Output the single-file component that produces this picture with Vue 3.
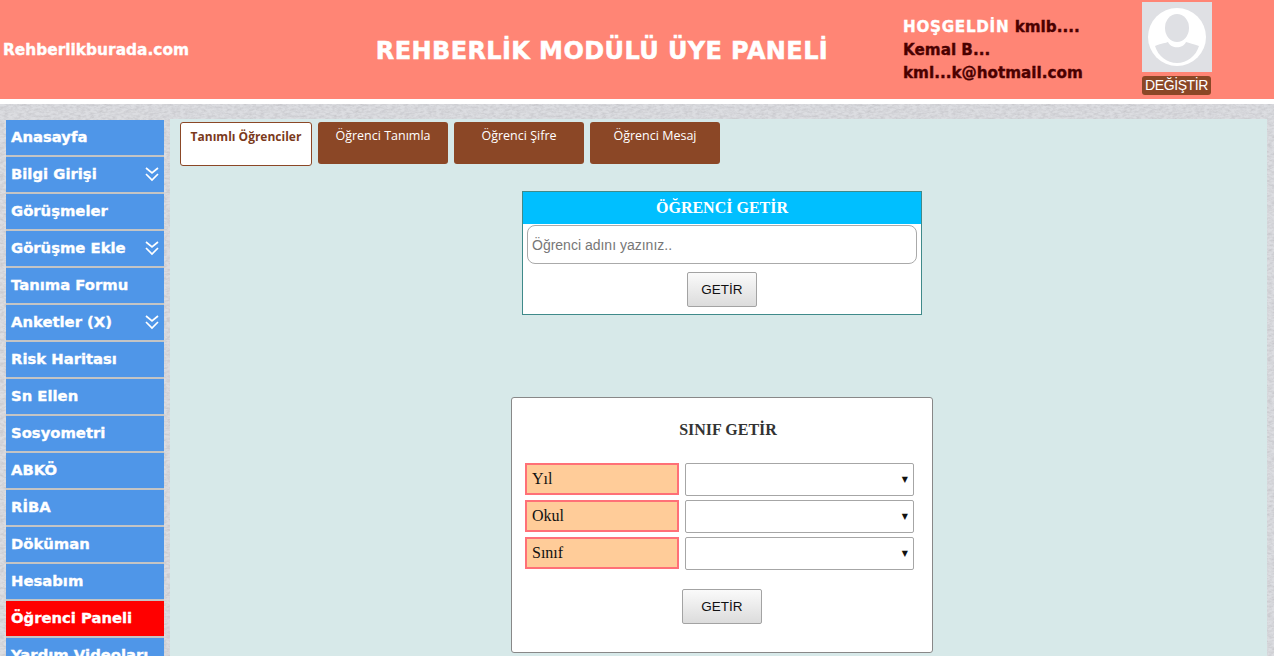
<script setup>
const menu = [
  { t: 'Anasayfa' }, { t: 'Bilgi Girişi', c: 1 }, { t: 'Görüşmeler' }, { t: 'Görüşme Ekle', c: 1 },
  { t: 'Tanıma Formu' }, { t: 'Anketler (X)', c: 1 }, { t: 'Risk Haritası' }, { t: 'Sn Ellen' },
  { t: 'Sosyometri' }, { t: 'ABKÖ' }, { t: 'RİBA' }, { t: 'Döküman' }, { t: 'Hesabım' },
  { t: 'Öğrenci Paneli', a: 1 }, { t: 'Yardım Videoları' }
]
const tabs = ['Tanımlı Öğrenciler', 'Öğrenci Tanımla', 'Öğrenci Şifre', 'Öğrenci Mesaj']
const rows = ['Yıl', 'Okul', 'Sınıf']
</script>

<template>
  <div class="page">
    <header class="head">
      <div class="brand">Rehberlikburada.com</div>
      <h1 class="title">REHBERLİK MODÜLÜ ÜYE PANELİ</h1>
      <div class="user">
        <div><span class="w">HOŞGELDİN</span> kmlb....</div>
        <div>Kemal B...</div>
        <div>kml...k@hotmail.com</div>
      </div>
      <div class="pic">
        <svg class="avatar" width="70" height="70" viewBox="0 0 70 70">
          <rect width="70" height="70" fill="#dfe0e4" />
          <circle cx="35" cy="35" r="29" fill="#fff" />
          <ellipse cx="35" cy="26" rx="12" ry="14" fill="#dfe0e4" />
          <path d="M13 44C20 41 24 41 26 40C29 47 41 47 44 40C47 41 52 42 57 44C54 54 45 61 35 61S16 54 13 44z" fill="#dfe0e4" />
        </svg>
        <span class="change">DEĞİŞTİR</span>
      </div>
    </header>
    <div class="strip"></div>
    <div class="body">
      <nav class="side">
        <a v-for="m in menu" :key="m.t" class="item" :class="{ active: m.a }">
          <span>{{ m.t }}</span>
          <svg v-if="m.c" class="chev" width="14" height="16" viewBox="0 0 14 16" fill="none" stroke="#fff" stroke-width="1.7">
            <path d="M1 2l6 5 6-5M1 8l6 6 6-6" />
          </svg>
        </a>
      </nav>
      <main class="panel">
        <div class="tabs">
          <button v-for="(t, i) in tabs" :key="t" class="tab" :class="{ on: i === 0 }">{{ t }}</button>
        </div>
        <section class="box1">
          <h3 class="box1-h">ÖĞRENCİ GETİR</h3>
          <div class="inp-wrap"><input class="inp" placeholder="Öğrenci adını yazınız.." /></div>
          <button class="btn b1">GETİR</button>
        </section>
        <section class="box2">
          <h3 class="box2-h">SINIF GETİR</h3>
          <div v-for="r in rows" :key="r" class="row">
            <div class="lab">{{ r }}</div>
            <div class="sel"><span class="arrow">▼</span></div>
          </div>
          <button class="btn b2">GETİR</button>
        </section>
      </main>
    </div>
  </div>
</template>

<style scoped>
.page {
  height: 656px;
  overflow: hidden;
  font-family: "DejaVu Sans", sans-serif;
  background-color: #dcdde1;
  background-image: url("data:image/svg+xml,%3Csvg xmlns='http://www.w3.org/2000/svg' width='256' height='256'%3E%3Cfilter id='n'%3E%3CfeTurbulence type='fractalNoise' baseFrequency='.22 .45' numOctaves='3' stitchTiles='stitch'/%3E%3CfeColorMatrix values='0 0 0 0 .55 0 0 0 0 .55 0 0 0 0 .58 1.6 0 0 0 -.55'/%3E%3C/filter%3E%3Crect width='256' height='256' filter='url(%23n)'/%3E%3C/svg%3E");
}
.head {
  height: 99px;
  background: #ff8575;
  border-bottom: 5px solid #fff;
  display: flex;
  align-items: flex-start;
  color: #fff;
}
.brand {
  width: 262px;
  padding: 41px 0 0 3px;
  box-sizing: border-box;
  font-size: 15.4px;
  font-weight: bold;
  line-height: 18px;
  -webkit-text-stroke: .35px #fff;
}
.title {
  width: 640px;
  box-sizing: border-box;
  padding-left: 40px;
  margin: 37px 0 0;
  text-align: center;
  font-size: 24px;
  line-height: 28px;
  font-weight: bold;
  letter-spacing: .4px;
  -webkit-text-stroke: .5px #fff;
  white-space: nowrap;
}
.user {
  width: 239px;
  margin-left: 1px;
  padding-top: 16px;
  font-size: 15.2px;
  line-height: 23px;
  font-weight: bold;
  color: #4a0000;
  -webkit-text-stroke: .35px #4a0000;
}
.w { color: #fff; letter-spacing: .7px; -webkit-text-stroke: .35px #fff; }
.pic {
  padding-top: 2px;
  display: flex;
  flex-direction: column;
  align-items: flex-start;
}
.avatar { display: block; }
.change {
  margin-top: 4px;
  width: 69px;
  height: 19px;
  line-height: 19px;
  text-align: center;
  background: #8b4726;
  border-radius: 3px;
  font-family: "Liberation Sans", sans-serif;
  font-size: 14px;
  letter-spacing: -.4px;
  color: #fff;
}
.strip { height: 15px; }
.body {
  display: flex;
  align-items: flex-start;
  padding: 0 7px 0 0;
}
.side {
  width: 158px;
  margin: 1px 6px 0 6px;
  flex: none;
  display: flex;
  flex-direction: column;
  gap: 2px;
  background: #c4c4c4;
}
.item {
  height: 35px;
  background: #4f96e8;
  color: #fff;
  font-size: 14.8px;
  font-weight: bold;
  line-height: 34px;
  padding: 0 5px;
  display: flex;
  justify-content: space-between;
  align-items: flex-start;
  white-space: nowrap;
  -webkit-text-stroke: .35px #fff;
}
.item.active { background: #f00; }
.chev { margin-top: 9px; }
.panel {
  flex: 1;
  height: 537px;
  background: #d7e9e9;
  display: flex;
  flex-direction: column;
  align-items: flex-start;
}
.tabs {
  display: flex;
  align-items: flex-start;
  gap: 6px;
  margin: 3px 0 0 10px;
}
.tab {
  width: 130px;
  height: 42px;
  border: 0;
  border-radius: 3px;
  background: #8b4726;
  color: #fff;
  font-family: "Open Sans", sans-serif;
  font-size: 12.5px;
  line-height: 16px;
  padding: 6px 0 0;
  display: flex;
  justify-content: center;
  align-items: flex-start;
}
.tab.on {
  width: 132px;
  height: 44px;
  background: #fff;
  border: 1px solid #8b4726;
  color: #7b3a1c;
  font-weight: 700;
  font-size: 12px;
  padding-top: 6px;
  box-sizing: border-box;
}
.box1 {
  margin: 25px 0 0 352px;
  width: 400px;
  height: 124px;
  box-sizing: border-box;
  border: 1px solid #3f8a8a;
  background: #fff;
  display: flex;
  flex-direction: column;
  align-items: center;
}
.box1-h {
  width: 100%;
  height: 32px;
  margin: 0;
  background: #00bfff;
  color: #fff;
  font: bold 16px/32px "Liberation Serif", serif;
  text-align: center;
}
.inp-wrap { width: 100%; padding: 1px 4px 0; box-sizing: border-box; }
.inp {
  display: block;
  width: 100%;
  height: 39px;
  box-sizing: border-box;
  border: 1px solid #aaa;
  border-radius: 8px;
  padding: 0 4px;
  font: 14px "Liberation Sans", sans-serif;
  outline: none;
}
.inp::placeholder { color: #777; }
.btn {
  display: block;
  height: 35px;
  border: 1px solid #a3a3a3;
  border-radius: 2px;
  background: linear-gradient(#fafafa, #dcdcdc);
  font: 13.5px "Liberation Sans", sans-serif;
  color: #111;
  padding: 0;
}
.b1 { width: 70px; margin-top: 8px; }
.box2 {
  margin: 82px 0 0 341px;
  width: 422px;
  height: 256px;
  box-sizing: border-box;
  border: 1px solid #888;
  border-radius: 3px;
  background: #fff;
  padding: 0 18px 0 13px;
  display: flex;
  flex-direction: column;
}
.box2-h {
  margin: 22px 0 23px;
  height: 20px;
  color: #333;
  font: bold 16px/20px "Liberation Serif", serif;
  text-align: center;
  padding-left: 17px;
}
.row {
  display: flex;
  gap: 6px;
  height: 33px;
  margin-bottom: 4px;
}
.lab {
  width: 154px;
  height: 32px;
  box-sizing: border-box;
  background: #ffcc99;
  border: 2px solid #ff7077;
  padding-left: 5px;
  font: 16px/28px "Liberation Serif", serif;
  color: #111;
}
.sel {
  width: 229px;
  height: 33px;
  box-sizing: border-box;
  border: 1px solid #a6a6a6;
  border-radius: 2px;
  background: #fff;
  display: flex;
  justify-content: flex-end;
  align-items: center;
  padding-right: 5px;
}
.arrow { font: 8px/1 "DejaVu Sans", sans-serif; color: #111; }
.b2 { width: 80px; margin: 15px 0 0 157px; }
</style>
